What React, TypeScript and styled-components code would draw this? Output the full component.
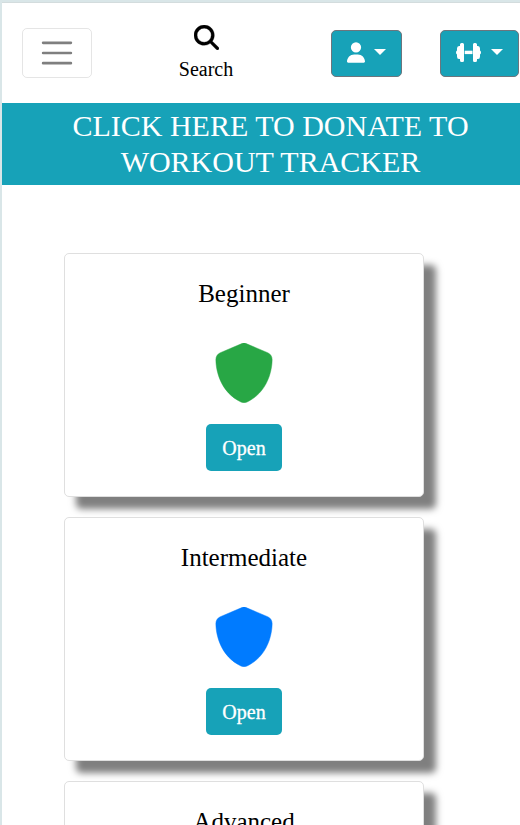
import React from "react";
import styled, { createGlobalStyle } from "styled-components";
import { FaMagnifyingGlass, FaShield, FaUser } from "react-icons/fa6";

const GlobalStyle = createGlobalStyle`
  * { box-sizing: border-box; }
  body {
    margin: 0;
    background: #d9e6e8;
    font-family: "Liberation Serif", "Times New Roman", serif;
    font-size: 20px;
    line-height: 1.5;
    color: #000;
    overflow: hidden;
  }
`;

const Frame = styled.div`
  height: 825px;
  padding: 2px 0 0 2px;
  overflow: hidden;
`;

const Page = styled.main`
  min-height: 823px;
  background: #fff;
  border-top: 1px solid #d3dcdd;
`;

const Navbar = styled.header`
  display: flex;
  height: 100px;
  padding-left: 20px;
`;

const MenuToggle = styled.button`
  display: flex;
  align-items: center;
  justify-content: center;
  width: 70px;
  height: 50px;
  margin-top: 25px;
  padding: 0;
  background: transparent;
  border: 1px solid rgba(0, 0, 0, 0.1);
  border-radius: 5px;
`;

const SearchLink = styled.a`
  display: flex;
  flex-direction: column;
  align-items: center;
  width: 56px;
  margin: 22px 0 0 86px;
  line-height: 30px;

  svg {
    width: 25px;
    height: 25px;
    margin-bottom: 4px;
    stroke: #000;
    stroke-width: 6;
  }
`;

const DropdownButton = styled.button<{ $width: number; $gap: number }>`
  display: flex;
  align-items: center;
  flex: none;
  width: ${(p) => p.$width}px;
  height: 47px;
  margin: 27px 0 0 ${(p) => p.$gap}px;
  padding: 0 0 2px 15px;
  color: #fff;
  background: #17a2b8;
  border: 1px solid #6c757d;
  border-radius: 5px;
`;

const UserIcon = styled(FaUser)`
  flex: none;
  width: 18px;
  height: 21px;
`;

const Caret = styled.span<{ $gap: number }>`
  margin: 0 0 2px ${(p) => p.$gap}px;
  border: 6px solid transparent;
  border-top-color: #fff;
  border-bottom: 0;
`;

const Banner = styled.a`
  display: block;
  width: 537px;
  padding: 5px 60px;
  color: #fff;
  background: #17a2b8;
  font-size: 30px;
  line-height: 36px;
  text-align: center;
`;

const CardList = styled.section`
  display: flex;
  flex-direction: column;
  gap: 20px;
  width: 360px;
  margin: 68px 0 0 62px;
`;

const Card = styled.article`
  display: flex;
  flex-direction: column;
  align-items: center;
  height: 244px;
  padding-top: 25px;
  background: #fff;
  border: 1px solid #dfdfdf;
  border-radius: 5px;
  box-shadow: 12px 12px 7px rgba(0, 0, 0, 0.5);
`;

const CardTitle = styled.h5`
  margin: 0;
  font-size: 25px;
  font-weight: 400;
  line-height: 30px;
`;

const Badge = styled(FaShield)<{ $tone: string }>`
  flex: none;
  width: 60px;
  height: 60px;
  margin-top: 34px;
  color: ${(p) => p.$tone};
  stroke-width: 4;
`;

const OpenButton = styled.button`
  flex: none;
  width: 76px;
  height: 47px;
  margin-top: 21px;
  padding: 0;
  color: #fff;
  background: #17a2b8;
  border: 0;
  border-radius: 5px;
  font: inherit;
  -webkit-text-stroke: 0.3px #fff;
`;

function MenuIcon() {
  return (
    <svg width="38" height="38" viewBox="0 0 30 30">
      <path
        d="M4 7h22M4 15h22M4 23h22"
        stroke="rgba(0,0,0,.5)"
        strokeLinecap="round"
        strokeMiterlimit="10"
        strokeWidth="2"
      />
    </svg>
  );
}

function DumbbellIcon() {
  return (
    <svg width="25" height="19" viewBox="0 0 25 19" fill="currentColor">
      <path d="M4 1.6Q4 0 5.6 0H6.6Q8 0 8 1.5v16Q8 19 6.6 19H5.6Q4 19 4 17.4V16H3Q1 16 1 13.5v-2Q0 11 0 9.5T1 7.5v-2Q1 3 3 3H4Z" />
      <path d="M8.7 7.7h7.8v3.4H8.7z" />
      <path d="M21 1.6Q21 0 19.4 0h-1Q17 0 17 1.5v16q0 1.5 1.4 1.5h1q1.6 0 1.6-1.6V16h1q2 0 2-2.5v-2q1-.5 1-2t-1-2v-2Q24 3 22 3h-1Z" />
    </svg>
  );
}

const levels = [
  { name: "Beginner", tone: "#28a745" },
  { name: "Intermediate", tone: "#007bff" },
  { name: "Advanced", tone: "#dc3545" },
];

export default function App() {
  return (
    <Frame>
      <GlobalStyle />
      <Page>
        <Navbar>
          <MenuToggle aria-label="Menu">
            <MenuIcon />
          </MenuToggle>
          <SearchLink>
            <FaMagnifyingGlass />
            Search
          </SearchLink>
          <DropdownButton $width={71} $gap={97} aria-label="Account">
            <UserIcon />
            <Caret $gap={9} />
          </DropdownButton>
          <DropdownButton $width={79} $gap={38} aria-label="Workouts">
            <DumbbellIcon />
            <Caret $gap={10} />
          </DropdownButton>
        </Navbar>
        <Banner>CLICK HERE TO DONATE TO WORKOUT TRACKER</Banner>
        <CardList>
          {levels.map((level) => (
            <Card key={level.name}>
              <CardTitle>{level.name}</CardTitle>
              <Badge $tone={level.tone} />
              <OpenButton>Open</OpenButton>
            </Card>
          ))}
        </CardList>
      </Page>
    </Frame>
  );
}
